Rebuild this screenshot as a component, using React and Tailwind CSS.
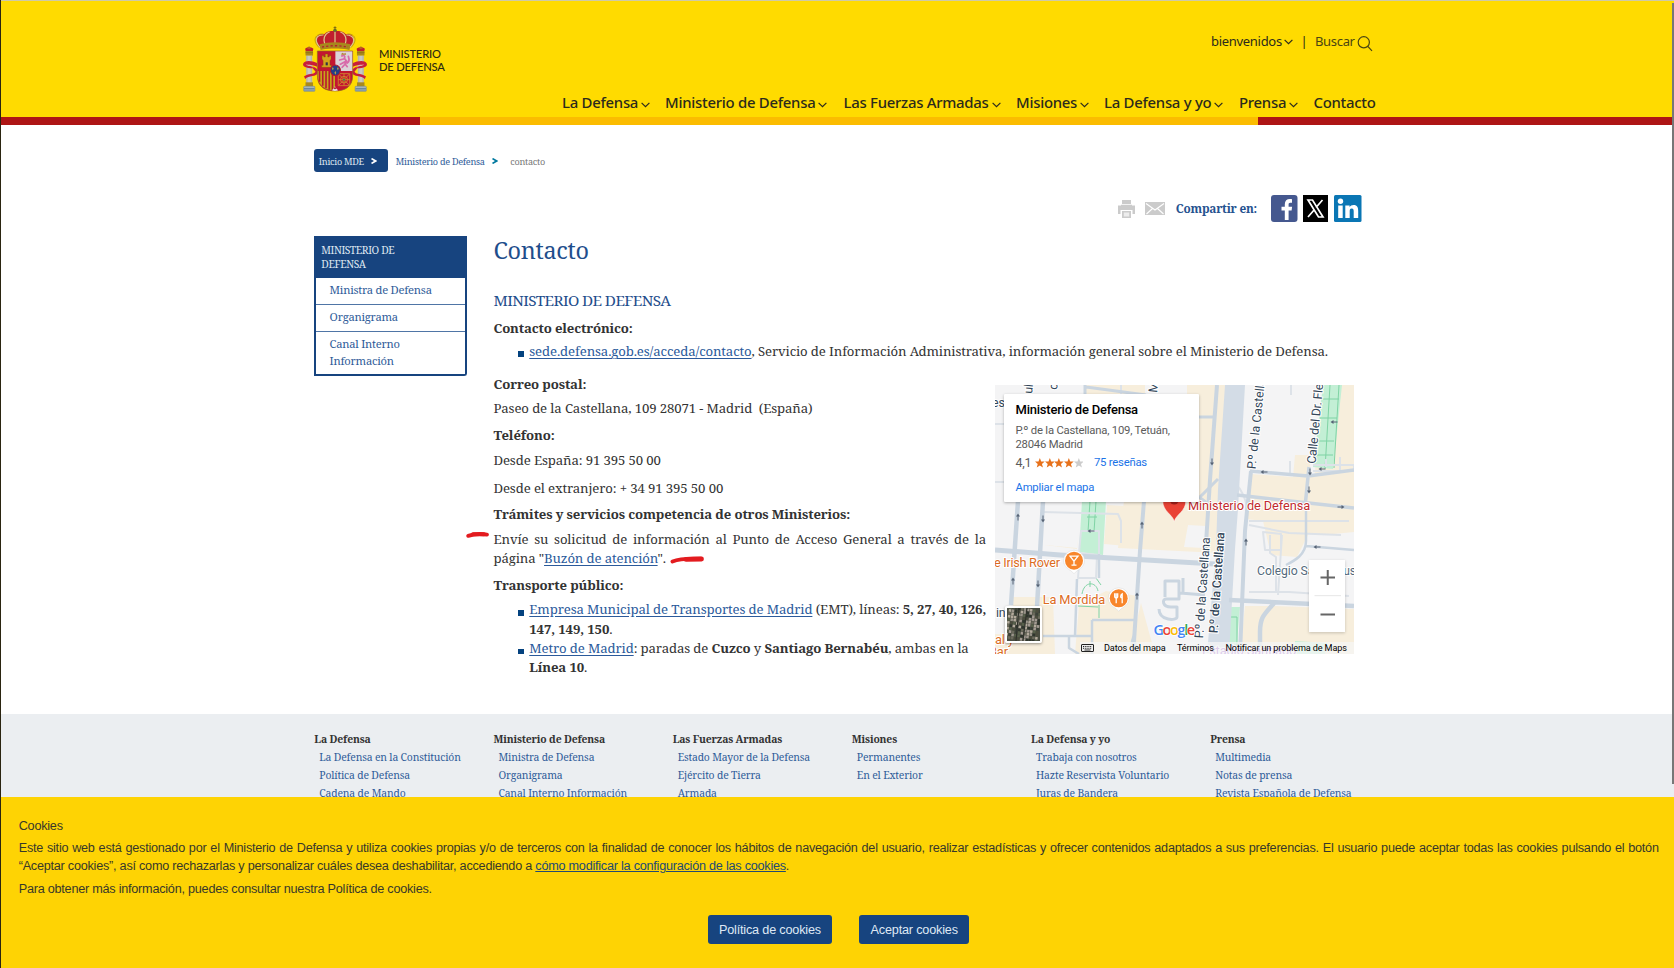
import React from 'react';

const NAV = [
  ['La Defensa', 'w-[103px]', true],
  ['Ministerio de Defensa', 'w-[178.5px]', true],
  ['Las Fuerzas Armadas', 'w-[172.5px]', true],
  ['Misiones', 'w-[88px]', true],
  ['La Defensa y yo', 'w-[135px]', true],
  ['Prensa', 'w-[74.5px]', true],
  ['Contacto', '', false],
];

const FOOTER = [
  ['La Defensa', ['La Defensa en la Constitución', 'Política de Defensa', 'Cadena de Mando']],
  ['Ministerio de Defensa', ['Ministra de Defensa', 'Organigrama', 'Canal Interno Información']],
  ['Las Fuerzas Armadas', ['Estado Mayor de la Defensa', 'Ejército de Tierra', 'Armada']],
  ['Misiones', ['Permanentes', 'En el Exterior']],
  ['La Defensa y yo', ['Trabaja con nosotros', 'Hazte Reservista Voluntario', 'Juras de Bandera']],
  ['Prensa', ['Multimedia', 'Notas de prensa', 'Revista Española de Defensa']],
];

function Chevron({ className }) {
  return (
    <svg className={className} width="9" height="6" viewBox="0 0 9 6" fill="none" stroke="#2b2a1c" strokeWidth="1.2">
      <path d="M0.6 0.8 4.5 4.7 8.4 0.8" />
    </svg>
  );
}

function Pillar({ flip }) {
  return (
    <g transform={flip ? 'translate(216 0) scale(-1 1)' : undefined}>
      <path d="M25 86c4-5 7-3 11-6 4 3 8 1 12 6l-2 9H27z" fill="#c01f2e" />
      <path d="M31 84h10M36 78v9" stroke="#b58a1c" strokeWidth="2" />
      <rect x="26" y="93" width="21" height="14" rx="2" fill="#a98a1d" />
      <path d="M26 98h21" stroke="#7a5e10" strokeWidth="1.5" />
      <rect x="28" y="107" width="17" height="82" fill="#c9c9c4" />
      <path d="M30 107v82M42 107v82" stroke="#96968f" strokeWidth="1.5" />
      <rect x="26" y="187" width="21" height="12" fill="#a98a1d" />
      <rect x="21" y="199" width="31" height="15" rx="2" fill="#b9c1c4" stroke="#5b7890" strokeWidth="1.5" />
      <path d="M22 205h29M22 210h29" stroke="#4e7390" strokeWidth="2.5" />
      <path d="M58 129c-12-6-32-10-38 1-4 10 8 15 26 15l8 10c-6 10-20 4-32 14l3 8c10-12 32-4 36-20 2-12-14-20-31-20 6-6 20 0 28 3z" fill="#c81e3a" />
      <path d="M28 134c8 1 14 3 20 8" stroke="#f0b5b0" strokeWidth="1.5" fill="none" />
    </g>
  );
}

function CoatOfArms() {
  return (
    <svg width="75" height="76" viewBox="0 0 225 228">
      <g transform="translate(111 0) scale(1.08 1) translate(-108 0)">
        <Pillar />
        <Pillar flip />
        <path d="M68 85C45 58 57 40 78 43c8-11 20-11 30-9 10-2 22-2 30 9 21-3 33 15 10 42z" fill="#c01f2e" />
        <g fill="none" stroke="#dcc98c" strokeWidth="3.4">
          <path d="M67 83C47 60 57 44 76 45" />
          <path d="M149 83c20-23 10-37-9-38" />
          <path d="M84 82c-12-24-6-40 9-46" />
          <path d="M132 82c12-24 6-40-9-46" />
          <path d="M108 34v48" />
        </g>
        <g fill="none" stroke="#785b13" strokeWidth="1.2">
          <path d="M64 83C43 60 54 40 76 42M152 83c21-23 11-43-10-41M108 30v6" />
        </g>
        <path d="M65 73c26-8 60-8 86 0l-3 17c-24-7-56-7-80 0z" fill="#a8871c" />
        <path d="M72 81c22-5 50-5 72 0" stroke="#b5212e" strokeWidth="4" strokeDasharray="6 6" fill="none" />
        <circle cx="108" cy="31" r="5" fill="#61742c" />
        <path d="M108 19v10M104 23h8" stroke="#6e5b16" strokeWidth="2.5" />
        <path d="M59 93h98v74c0 34-22 46-49 46s-49-12-49-46z" fill="#c31631" stroke="#8f6a24" strokeWidth="2" />
        <path d="M109 94h47v59h-47z" fill="#dcd3d9" />
        <path d="M60 153h48v58c-27 0-47-14-48-44z" fill="#c6a71b" />
        <path d="M65 153v32M74 153v44M83 153v52M92 153v56M101 153v58" stroke="#bb1830" strokeWidth="4.5" />
        <g fill="#d3a51b" stroke="#77510e" strokeWidth="1">
          <path d="M72 117v-10h5v4h4v-9h7v9h4v-4h5v10l-3 5v14h4v6H71v-6h4v-14z" />
        </g>
        <path d="M82 136v-9h6v9z" fill="#334" />
        <g fill="none" stroke="#d86aaa" strokeWidth="5" strokeLinecap="round">
          <path d="M127 108c6-5 10 1 7 7l6 8-4 9 6 8M132 117l-11 3M136 125l-13 8M137 131l-9 11M142 129c8-5 5-14 3-20" />
        </g>
        <path d="M125 102l4-4 4 3 4-3 2 6h-13z" fill="#b48438" />
        <g fill="none" stroke="#d08f2c" strokeWidth="2.4">
          <path d="M117 161h32v36h-32zM117 179h32M133 161v36M118 162l30 34M148 162l-30 34" />
          <circle cx="133" cy="179" r="10" />
        </g>
        <circle cx="133" cy="179" r="3" fill="#3a8a3c" />
        <path d="M99 211c3-2 7-6 9-12 2 6 6 10 9 12-6 3-12 3-18 0z" fill="#e8e2df" />
        <circle cx="108" cy="205" r="3" fill="#b52035" />
        <ellipse cx="109" cy="151" rx="14" ry="16" fill="#233f86" stroke="#b3182d" strokeWidth="3" />
        <g fill="#b5a04b">
          <path d="M102 141l2.500 5-2.500 5-2.500-5zM116 141l2.500 5-2.500 5-2.500-5zM109 153l2.500 5-2.500 6-2.500-6z" />
        </g>
      </g>
    </svg>
  );
}

function Header() {
  return (
    <header className="font-['Noto_Sans','Open_Sans',sans-serif] text-[#2b2a1c]">
      <div className="flex h-[117px] border-t border-[#cfcaa6] bg-[#ffdb00]">
        <div className="flex w-[560px] shrink-0 pl-[297px] pt-[19px]">
          <CoatOfArms />
          <div className="ml-[6px] mt-[26.5px] font-['Lato',sans-serif] text-[11.2px] leading-[13px] font-medium tracking-[-0.2px] text-[#2b2a10]">
            <div>MINISTERIO</div>
            <div>DE DEFENSA</div>
          </div>
        </div>
        <div className="flex flex-col">
          <div className="mt-[29.5px] flex h-[20px] pl-[650px] text-[13px] leading-[20px] tracking-[-0.3px] whitespace-nowrap">
            <span className="w-[71px]">bienvenidos</span>
            <Chevron className="ml-[1.5px] mt-[8px]" />
            <span className="ml-[8px]">|</span>
            <span className="ml-[7.5px] w-[39.5px] text-[#4a4512]">Buscar</span>
            <svg className="ml-[2.5px] mt-[5px]" width="16" height="16" viewBox="0 0 16 16" fill="none" stroke="#4a4512" strokeWidth="1.2">
              <circle cx="6.8" cy="6.3" r="5.6" />
              <path d="M10.8 10.3 15 14.8" />
            </svg>
          </div>
          <nav className="mt-[41px] flex pl-px text-[14.9px] leading-[20px] font-medium tracking-[-0.26px] whitespace-nowrap">
            {NAV.map(([label, width, arrow]) => (
              <a key={label} className={`${width} flex shrink-0`}>
                {label}
                {arrow && <Chevron className="ml-[3px] mt-[10px]" />}
              </a>
            ))}
          </nav>
        </div>
      </div>
      <div className="flex h-[7.5px]">
        <div className="w-[419px] bg-[#ae1515]" />
        <div className="w-[838px] bg-[#fbbc00]" />
        <div className="flex-1 bg-[#ae1515]" />
      </div>
    </header>
  );
}

function CrumbArrow({ color, className }) {
  return (
    <svg className={className} width="6" height="6" viewBox="0 0 6 6" fill="none" stroke={color} strokeWidth="1.7">
      <path d="M0.5 0.6 4.6 3 0.5 5.4" />
    </svg>
  );
}

function Breadcrumb() {
  return (
    <div className="flex h-[23px] items-center text-[9.1px] tracking-[-0.28px] whitespace-nowrap text-[#2f5c99]">
      <div className="flex h-[23px] w-[74px] items-center rounded-[3px] bg-[#17447f] pl-[4.5px] text-[#dfe7f1]">
        <span className="w-[45px] pt-[3px]">Inicio MDE</span>
        <CrumbArrow color="#fff" className="ml-[7.5px]" />
      </div>
      <span className="ml-[7.5px] w-[89px] pt-[3px]">Ministerio de Defensa</span>
      <CrumbArrow color="#00799f" className="ml-[7px]" />
      <span className="ml-[12.5px] pt-[3px] text-[#777]">contacto</span>
    </div>
  );
}

function Share() {
  return (
    <div className="ml-[803.500px] mt-[23px] flex h-[27px] items-center">
      <svg width="17" height="18" viewBox="0 0 17 18" fill="#cbcbcb">
        <path d="M4 0h9v4H4zM0 5.500h3V4.800h11v.7h3V14h-2.500V10H2.500v4H0zM4 11h9v7H4z" />
        <path d="M5.800 12.500h5.400v4H5.800z" fill="#ededed" />
      </svg>
      <svg className="ml-[10px]" width="20" height="13" viewBox="0 0 20 13">
        <path d="M0 0h20v13H0z" fill="#cbcbcb" />
        <path d="M1 1.500 10 8l9-6.500M1.500 12l6-5.500M18.500 12l-6-5.500" fill="none" stroke="#fff" strokeWidth="1.100" />
      </svg>
      <span className="mb-[1px] ml-[11px] w-[95px] whitespace-nowrap text-[11.8px] leading-[18px] font-bold tracking-[-0.22px] text-[#25528f]">Compartir en:</span>
      <svg width="27" height="27" viewBox="0 0 27 27">
        <rect width="26.500" height="27" rx="3" fill="#45588f" />
        <path d="M13.800 25v-9.500h-3.300v-3.800h3.300V9.200c0-3.300 2-5.100 5-5.100 1 0 1.800 0 2.200.1v3.500h-1.700c-1.300 0-1.700.7-1.700 1.900v2.100h3.500l-.5 3.800h-3V25z" fill="#fff" />
      </svg>
      <svg className="ml-[5.500px]" width="25" height="27" viewBox="0 0 25 27">
        <path d="M0 0h25v27H0z" fill="#000" />
        <path d="M5 5h4.500l10.500 17h-4.500zM19.500 5l-6.500 7.500M11.500 14.500 5 22" fill="none" stroke="#fff" strokeWidth="1.700" />
      </svg>
      <svg className="ml-[5.500px]" width="28" height="27" viewBox="0 0 28 27">
        <rect width="27.500" height="27" rx="1.500" fill="#0a76b4" />
        <circle cx="6.500" cy="6.300" r="2.700" fill="#fff" />
        <path d="M4.200 10.400h4.500V23H4.200zM11.300 10.400h4.300v1.800c.7-1.200 2.100-2.100 4-2.100 3.700 0 4.600 2.500 4.600 5.900v7h-4.500v-6.200c0-1.700-.1-3.300-2-3.300s-2 1.600-2 3.200V23h-4.400z" fill="#fff" />
      </svg>
    </div>
  );
}

function Sidebar() {
  const item = 'pl-[13.3px] pr-[28px] text-[11.2px] leading-[16.5px] tracking-[-0.24px] text-[#2f5c99]';
  return (
    <aside className="h-[140px] w-[152.5px] shrink-0 rounded-br-[3px] border-2 border-t-0 border-[#17447f]">
      <div className="h-[41.500px] bg-[#17447f] pl-[5px] pr-[60px] pt-[7px] text-[10.3px] leading-[14.4px] tracking-[-0.38px] text-[#dfe7f1]">MINISTERIO DE DEFENSA</div>
      <div className={`${item} h-[27px] border-b border-[#4f75a6] pt-[4.500px]`}>Ministra de Defensa</div>
      <div className={`${item} h-[27px] border-b border-[#4f75a6] pt-[4.500px]`}>Organigrama</div>
      <div className={`${item} pt-[4.500px]`}>Canal Interno Información</div>
    </aside>
  );
}

const MAP_FONT = "font-['Roboto',sans-serif]";

function Arrow({ x, y, r = 0 }) {
  return (
    <g transform={`translate(${x} ${y}) rotate(${r})`}>
      <path d="M0 3.500V-2" stroke="#566375" strokeWidth="1" />
      <path d="M-2 -0.500 0 -3.500 2 -0.500z" fill="#566375" />
    </g>
  );
}

function PlacePin({ x, y, children }) {
  return (
    <g transform={`translate(${x} ${y})`}>
      <path d="M-10.500 0a10.500 10.500 0 1 1 21 0c0 5-4 8-8 10.500L0 13l-2.500-2.500C-6.500 8-10.500 5-10.500 0z" fill="#fff" stroke="#d6d6d6" strokeWidth="0.500" />
      <circle r="9" fill="#f8862b" />
      {children}
    </g>
  );
}

function MapCanvas() {
  return (
    <svg className="block" width="359" height="269" viewBox="0 0 359 269">
      <path d="M0 0h359v269H0z" fill="#f4f4f5" />
      <g fill="#f7eedc">
        <path d="M90 0h60v12l75-2V0h10l-11 168-101-5 6-47H86L82 164 50 160 58 116H40l2-20h45z" />
        <path d="M192 0h40l-8 140h-32zM112 120l35 2-3 40-35-3z" />
        <path d="M345 0h14v98l-40-2 4-40zM256 89l42 3 2-22h15v20l44 3v60l-45-5-12 24-26-2-8-34-17-2z" />
        <path d="M18 212h40l2 57H0v-20h18zM84 220l27-14 32 5-4 58H80zM146 218l14 51h-26zM250 221h30l79 3v45H245z" />
      </g>
      <path d="M50 116h38l-6 47-32-3zM193 140l18 1-2 22-20-1zM328 150l31-3v14l-29-2zM70 221h13l-2 13H70z" fill="#f4f4f5" />
      <g fill="#c3efd5">
        <path d="M328 0h19l-9 84-20-2zM87 116h24l-3 54-24-3zM233 222h12l-4 47h-16zM300 256l32 2-2 11h-30z" />
      </g>
      <g fill="none" stroke="#7fd3a4" strokeWidth="1">
        <path d="M335 0l-5 84M344 0l-5 83M326 14h18M325 33h17M323 56h16M322 70h16M95 116l-2 31M101 116l-2 31M92 132h10M87 209c2-13 14-13 16-3M95 196v6M83 221l20 1M104 214v19M101 193l5 7M234 232h8v28h-10z" />
      </g>
      <g fill="none" stroke="#dde2e8" strokeWidth="2" strokeLinejoin="round">
        <path d="M90 10l65 10M126 0v12M0 39h20M0 97h10M48 127l75 2 3 7v22M254 136h100M296 0v10M254 140l40 8 52 2M275 150v18l6 4v36M287 150l-4 60M254 207h40l60 4M268 147l18 2v16h-16z" />
        <path d="M86 146h18v24l-20-2zM85 168l-2 25h18l1-22M240 98q12 12 12 30M295 90V76M318 80h41v6h-41M345 72v14M331 74v8" />
      </g>
      <path d="M230 0h20l-7 124-3 40-6 105h-22l9-105 2-60z" fill="#d3dce6" />
      <g fill="none" stroke="#cad5e0" strokeLinejoin="round">
        <path d="M0 165l65 5 155 9" strokeWidth="5" />
        <path d="M23 116 16 220M48 116 42 222" strokeWidth="4.500" />
        <path d="M149 116l-4 50-6 90" strokeWidth="4" />
        <path d="M222 0l-7 95-5 80" strokeWidth="4" />
        <path d="M256 86l-6 60-5 123" strokeWidth="4" />
        <path d="M255 86l58 5 46-6M314 82l-4 40" strokeWidth="3.500" />
        <path d="M242 110l117 13" strokeWidth="3.500" />
        <path d="M234 215l125 6M280 217c-10 12-15 14-15 30v22" strokeWidth="4.500" />
        <path d="M205 112l18-18M204 112l16 12M204 32h16" strokeWidth="3" />
        <path d="M82 194l-2 57M97 235h43M97 235v34M48 251h48M74 251v12l10 6M104 169v24" strokeWidth="2.500" />
        <path d="M170 212v-16h14v18h-13c-4 0-4 8 5 8h6v10c0 4-18 4-18-8M188 193v14M185 208l25 2" strokeWidth="3" />
        <path d="M311 116v40c0 14-12 20-20 24M311 161l48 4" strokeWidth="2.500" />
        <path d="M90 0v14M91 2l60 8" strokeWidth="3" />
      </g>
      <path d="M139 248c-4 8-4 10-2 21h7z" fill="#cad5e0" />
      <Arrow x={23} y={132} /><Arrow x={48} y={134} r={180} /><Arrow x={18} y={196} /><Arrow x={43} y={199} r={180} />
      <Arrow x={147} y={140} /><Arrow x={142} y={211} /><Arrow x={217} y={77} r={180} /><Arrow x={269} y={87} r={-90} />
      <Arrow x={315} y={87} r={180} /><Arrow x={314} y={105} r={180} /><Arrow x={327} y={84} r={-90} /><Arrow x={339} y={37} r={-90} />
      <Arrow x={346} y={122} r={90} /><Arrow x={251} y={157} /><Arrow x={322} y={162} r={-90} /><Arrow x={96} y={146} r={-90} />
      <g className={MAP_FONT} fill="#34475a" stroke="#fff" strokeWidth="2" paintOrder="stroke" fontSize="12.300">
        <text transform="translate(260.500 84.500) rotate(-84)" textLength="104">P.º de la Castellana</text>
        <text transform="translate(320.500 79) rotate(-84.500)" textLength="107">Calle del Dr. Fleming</text>
        <text transform="translate(208 253.500) rotate(-86)" textLength="101">P.º de la Castellana</text>
        <text transform="translate(222.500 248.500) rotate(-86)" textLength="101" fontWeight="500">P.º de la Castellana</text>
        <text transform="translate(37 9) rotate(-84)">uli</text>
        <text transform="translate(62 5) rotate(-84)">c</text>
        <text transform="translate(162 8) rotate(-84)">M</text>
        <text x="-3" y="22">es</text>
        <text x="1" y="232">in</text>
      </g>
      <g className={MAP_FONT} stroke="#fff" strokeWidth="2" paintOrder="stroke" fontSize="12.800">
        <g fill="#dc6c1f">
          <text x="-1" y="181.700" textLength="66">e Irish Rover</text>
          <text x="47.700" y="218.700" textLength="62.500">La Mordida</text>
          <text x="0" y="259">al y</text>
          <text x="-6" y="271">Bar</text>
        </g>
        <text x="262" y="189.500" fill="#53697c" fontSize="12.300" textLength="99">Colegio San Jesus</text>
        <text x="207" y="270" fill="#9350c9">Estadio Santiago</text>
      </g>
      <PlacePin x={79} y={175.700}>
        <path d="M-4-4.500h8L0 .5zM0 0v4.500M-2.500 4.500h5" fill="none" stroke="#fff" strokeWidth="1.300" />
      </PlacePin>
      <PlacePin x={123.700} y={213.300}>
        <path d="M-4-5v3.500c0 1.500 3 1.500 3 0V-5M-2.500-5v10M3.500 5V-4.500c-2 1-2 4.500 0 4.500" fill="none" stroke="#fff" strokeWidth="1.300" />
      </PlacePin>
      <path d="M179.300 136.500c-1.500-7-11.500-10-11.500-20.500a11.500 11.500 0 0 1 23 0c0 10.500-10 13.500-11.500 20.500z" fill="#e94235" stroke="#fff" strokeWidth="0.500" />
      <circle cx="179.300" cy="115" r="4.500" fill="#a5201a" />
      <text className={MAP_FONT} x="193" y="124.700" fontSize="12.800" textLength="122" fill="#c22b2f" stroke="#fff" strokeWidth="2" paintOrder="stroke">Ministerio de Defensa</text>
      <text className="font-['Open_Sans',sans-serif]" x="158.500" y="249.500" fontSize="14.500" textLength="41.500" stroke="#fff" strokeWidth="1.500" paintOrder="stroke" fontWeight="600">
        <tspan fill="#4285f4">G</tspan><tspan fill="#ea4335">o</tspan><tspan fill="#fbbc05">o</tspan><tspan fill="#4285f4">g</tspan><tspan fill="#34a853">l</tspan><tspan fill="#ea4335">e</tspan>
      </text>
    </svg>
  );
}

const ROOFS = ['#57604a', '#9a948a', '#3c4239', '#b3aa9c', '#6b6a5c', '#4b4c3d', '#a39a92', '#2f352d'];

function Satellite() {
  const cells = [];
  for (let r = 0; r < 11; r++) for (let c = 0; c < 11; c++) cells.push([c * 3, r * 3, ROOFS[(r * r * 3 + c * 5 + ((r * c) % 7)) % 8]]);
  return (
    <svg width="33" height="33" viewBox="0 0 33 33">
      <rect width="33" height="33" fill="#4a4d42" />
      <g transform="rotate(8 16 16)">
        {cells.map(([x, y, f]) => <rect key={`${x}-${y}`} x={x} y={y} width="2.500" height="2.700" fill={f} />)}
      </g>
      <path d="M20 0 16 33M12 0 9 33" stroke="#30332c" strokeWidth="1.200" />
    </svg>
  );
}

function Star({ fill }) {
  return (
    <svg width="9.700" height="9.700" viewBox="0 0 10 10" fill={fill}>
      <path d="M5 .1 6.400 3.500l3.600.2-2.800 2.400 1 3.700L5 7.800 1.800 9.800l1-3.700L0 3.700l3.600-.2z" />
    </svg>
  );
}

function MapPanel() {
  return (
    <div className={`relative ml-[9.500px] mt-[24px] h-[269px] w-[359px] shrink-0 overflow-hidden ${MAP_FONT}`}>
      <MapCanvas />
      <div className="absolute left-[9px] top-[9px] h-[107.500px] w-[195px] rounded-[1px] bg-white pl-[11px] pt-[8px] text-[11.3px] leading-[13.7px] tracking-[-0.22px] whitespace-nowrap text-[#5b5b5b] shadow-[0_1px_3px_rgba(0,0,0,0.3)]">
        <div className="text-[13px] leading-[16px] font-medium text-black">Ministerio de Defensa</div>
        <div className="mt-[5.500px]">P.º de la Castellana, 109, Tetuán,</div>
        <div>28046 Madrid</div>
        <div className="mt-[5px] flex items-center">
          <span className="w-[19.500px] text-[12.5px]">4,1</span>
          <Star fill="#e7711b" /><Star fill="#e7711b" /><Star fill="#e7711b" /><Star fill="#e7711b" /><Star fill="#ccc" />
          <span className="ml-[10.500px] text-[#1a73e8]">75 reseñas</span>
        </div>
        <div className="mt-[10.500px] text-[#1a73e8]">Ampliar el mapa</div>
      </div>
      <div className="absolute left-[314px] top-[175px] flex h-[72px] w-[35.5px] flex-col items-center bg-white shadow-[0_1px_3px_rgba(0,0,0,0.2)]">
        <svg width="35" height="72" viewBox="0 0 35 72" fill="none" stroke="#666" strokeWidth="2">
          <path d="M10.500 17.500h14.500M17.750 10v15M10.500 54.500h14.500" />
          <path d="M4.500 35.700h26.500" stroke="#e6e6e6" strokeWidth="1" />
        </svg>
      </div>
      <div className="absolute left-[9.500px] top-[221px] rounded-[2px] border-2 border-white shadow-[0_1px_3px_rgba(0,0,0,0.4)]">
        <Satellite />
      </div>
      <div className="absolute bottom-0 right-0 flex h-[12px] w-[274px] items-center bg-[#f5f5f5]/75 text-[9.100px] leading-[12px] whitespace-nowrap text-black">
        <svg className="ml-[0.500px]" width="13" height="8" viewBox="0 0 13 8">
          <rect x="0.500" y="0.500" width="12" height="7" rx="0.500" fill="#eee" stroke="#222" />
          <path d="M2 2.500h9M2 4.300h9" stroke="#222" strokeWidth="1" strokeDasharray="1 0.800" />
          <path d="M3.500 6h6" stroke="#222" strokeWidth="0.900" />
        </svg>
        <span className="ml-[10px] w-[73px]">Datos del mapa</span>
        <span className="w-[48.500px]">Términos</span>
        <span>Notificar un problema de Maps</span>
      </div>
    </div>
  );
}

function Bullet() {
  return <span className="mr-[5.300px] mt-[10px] size-[5.500px] shrink-0 bg-[#04427f]" />;
}

const LINK = 'text-[#2b5a9b] underline underline-offset-2';

function Content() {
  return (
    <article className="ml-[26.700px] text-[13.2px] leading-[20px] tracking-[-0.13px] text-[#333]">
      <h1 className="mt-[-0.700px] text-[23.4px] leading-[30px] tracking-[-0.3px] text-[#1f4e8c]">Contacto</h1>
      <h2 className="mt-[24.700px] text-[15.3px] leading-[20px] tracking-[-0.6px] text-[#1f4e8c]">MINISTERIO DE DEFENSA</h2>
      <h3 className="mt-[7.700px] font-bold tracking-[-0.15px]">Contacto electrónico:</h3>
      <div className="mt-[3.800px] flex pl-[25px] whitespace-nowrap">
        <Bullet />
        <p><a className={LINK}>sede.defensa.gob.es/acceda/contacto</a>, Servicio de Información Administrativa, información general sobre el Ministerio de Defensa.</p>
      </div>
      <div className="flex">
        <div className="w-[492.500px] shrink-0">
          <h3 className="mt-[12.300px] font-bold">Correo postal:</h3>
          <p className="mt-[4.500px]">Paseo de la Castellana, 109 28071 - Madrid&nbsp; (España)</p>
          <h3 className="mt-[6.500px] font-bold">Teléfono:</h3>
          <p className="mt-[5px]">Desde España: 91 395 50 00</p>
          <p className="mt-[8.500px]">Desde el extranjero: + 34 91 395 50 00</p>
          <h3 className="mt-[6px] font-bold">Trámites y servicios competencia de otros Ministerios:</h3>
          <div className="relative mt-[5.500px]">
            <p className="text-justify leading-[19.400px]">
              Envíe su solicitud de información al Punto de Acceso General a través de la página "<a className={LINK}>Buzón de atención</a>".
            </p>
            <svg className="absolute left-[-28px] top-[0px]" width="25" height="10" viewBox="0 0 25 10" fill="none" stroke="#e31b1f" strokeWidth="3.900" strokeLinecap="round" strokeLinejoin="round">
              <path d="M3.200 5.800C8 4.200 14 3.500 22 4.600" />
              <path d="M8 4.200h11" strokeWidth="3.900" />
            </svg>
            <svg className="absolute left-[176.500px] top-[24.500px]" width="36" height="11" viewBox="0 0 36 11" fill="none" stroke="#e31b1f" strokeWidth="3.900" strokeLinecap="round">
              <path d="M2.500 7.500C9 4.800 18 4.200 31 4.800" />
              <path d="M16 5.400 31.500 5" strokeWidth="4.800" />
            </svg>
          </div>
          <h3 className="mt-[6.500px] font-bold">Transporte público:</h3>
          <div className="mt-[5px] flex pl-[25px] leading-[19.400px]">
            <Bullet />
            <p className="whitespace-nowrap"><a className={LINK}>Empresa Municipal de Transportes de Madrid</a> (EMT), líneas: <b>5, 27, 40, 126,<br />147, 149, 150</b>.</p>
          </div>
          <div className="flex pl-[25px] leading-[19.400px]">
            <Bullet />
            <p className="whitespace-nowrap"><a className={LINK}>Metro de Madrid</a>: paradas de <b>Cuzco</b> y <b>Santiago Bernabéu</b>, ambas en la<br /><b>Línea 10</b>.</p>
          </div>
        </div>
        <MapPanel />
      </div>
    </article>
  );
}

function Cookies() {
  return (
    <div className="fixed bottom-0 left-px right-0 h-[171px] bg-[#fed304] pl-[17.700px] pr-[15.300px] pt-[19.500px] font-['Liberation_Sans',Arial,sans-serif] text-[12.650px] leading-[18.200px] tracking-[-0.235px] text-[#38382a]">
      <p>Cookies</p>
      <p className="mt-[4.300px] text-justify">
        Este sitio web está gestionado por el Ministerio de Defensa y utiliza cookies propias y/o de terceros con la finalidad de conocer los hábitos de navegación del usuario, realizar estadísticas y ofrecer contenidos adaptados a sus preferencias. El usuario puede aceptar todas las cookies pulsando el botón “Aceptar cookies”, así como rechazarlas y personalizar cuáles desea deshabilitar, accediendo a <a className="text-[#234a72] underline underline-offset-1">cómo modificar la configuración de las cookies</a>.
      </p>
      <p className="mt-[4.500px]">Para obtener más información, puedes consultar nuestra Política de cookies.</p>
      <div className="mt-[17px] flex pl-[689px] text-[#dfe8f4]">
        <button className="h-[29px] w-[124.500px] rounded-[3px] bg-[#17447f] tracking-[-0.18px]">Política de cookies</button>
        <button className="ml-[27px] h-[29px] w-[110px] rounded-[3px] bg-[#17447f] tracking-[-0.18px]">Aceptar cookies</button>
      </div>
    </div>
  );
}

export default function App() {
  return (
    <div className="relative h-screen overflow-hidden border-l border-[#2a2410] bg-white font-['Noto_Serif','DejaVu_Serif_Condensed',serif]">
      <Header />
      <main className="h-[589.500px] pl-[313.300px] pt-[24.500px]">
        <Breadcrumb />
        <Share />
        <div className="mt-[14px] flex">
          <Sidebar />
          <Content />
        </div>
      </main>
      <footer className="flex h-[300px] bg-[#ebeef1] pl-[313.300px] pt-[16px] text-[10.4px] leading-[18px] tracking-[-0.17px]">
        {FOOTER.map(([title, links]) => (
          <div key={title} className="w-[179.200px] shrink-0 whitespace-nowrap">
            <div className="font-bold text-[#333]">{title}</div>
            {links.map((l) => <div key={l} className="pl-[5px] text-[#2f5c99]">{l}</div>)}
          </div>
        ))}
      </footer>
      <Cookies />
      <div className="absolute right-0 top-[3px] h-[781px] w-[2px] bg-[#777]" />
    </div>
  );
}
